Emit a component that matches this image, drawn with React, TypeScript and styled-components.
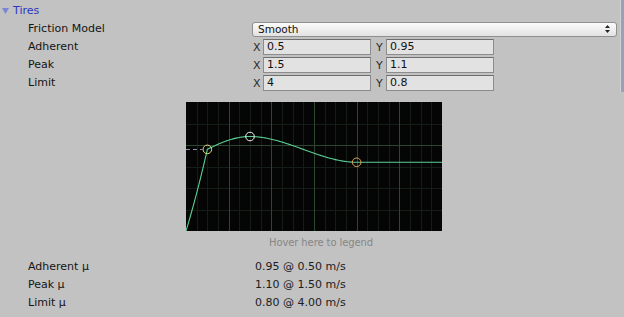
import React from 'react';
import styled, { createGlobalStyle } from 'styled-components';

const GlobalStyle = createGlobalStyle`
  html, body {
    margin: 0;
    padding: 0;
    background: #c2c2c2;
  }
  body {
    font-family: "DejaVu Sans", "Liberation Sans", sans-serif;
    font-size: 11px;
    color: #141414;
  }
`;

const Page = styled.div`
  position: relative;
  width: 624px;
  height: 317px;
  overflow: hidden;
  background: #c2c2c2;
`;

const ScrollThumb = styled.div`
  position: absolute;
  top: 0;
  right: 0;
  width: 3px;
  height: 92px;
  background: #9ba1b4;
  border-left: 1px solid #d2d2d2;
`;

const Foldout = styled.div`
  display: flex;
  align-items: center;
  height: 18px;
  margin-top: 2px;
  padding-left: 2px;
  gap: 4px;
`;

const FoldTitle = styled.span`
  color: #2b36c4;
  line-height: 18px;
`;

const Row = styled.div`
  display: flex;
  align-items: center;
  height: 18px;
  padding: 0 7px 0 28px;
`;

const Label = styled.div`
  width: 224px;
  flex: none;
  line-height: 18px;
  white-space: nowrap;
`;

const Value = styled.div`
  flex: 1;
  padding-left: 3px;
  line-height: 18px;
  color: #1c1c1c;
`;

const Popup = styled.div`
  flex: 1;
  height: 13px;
  display: flex;
  align-items: center;
  justify-content: space-between;
  padding: 0 6px 0 5px;
  border: 1px solid #8f8f8f;
  border-radius: 3px;
  background: linear-gradient(#fbfbfb, #e2e2e2);
  font-size: 10.5px;
  color: #111;
`;

const VectorGrid = styled.div`
  flex: 1;
  display: grid;
  grid-template-columns: repeat(3, 1fr);
  gap: 4px;
`;

const Axis = styled.div`
  display: flex;
  align-items: center;
`;

const AxisLabel = styled.span`
  width: 10px;
  padding-left: 1px;
  flex: none;
  color: #2a2a2a;
`;

const NumberField = styled.div`
  flex: 1;
  height: 14px;
  line-height: 14px;
  padding-left: 3px;
  border: 1px solid #8c8c8c;
  border-top-color: #6e6e6e;
  background: #e2e2e2;
  color: #111;
`;

const GraphArea = styled.div`
  display: flex;
  flex-direction: column;
  align-items: center;
  padding-left: 4px;
  margin-top: 10px;
`;

const GraphBox = styled.svg`
  display: block;
  background: #050505;
`;

const Legend = styled.div`
  width: 256px;
  box-sizing: border-box;
  padding-left: 14px;
  margin-top: 5px;
  text-align: center;
  font-size: 10px;
  line-height: 14px;
  color: #868686;
  letter-spacing: -0.1px;
`;

const InfoRows = styled.div`
  margin-top: 8px;
`;

const W = 256;
const H = 129;
const MAX_X = 6;
const Y_SCALE = 85.9;

const adherent = { x: 0.5, y: 0.95 };
const peak = { x: 1.5, y: 1.1 };
const limit = { x: 4, y: 0.8 };

const hermite = (t: number, p0: number, p1: number, m0: number, m1: number, dx: number) => {
  const t2 = t * t;
  const t3 = t2 * t;
  return (
    (2 * t3 - 3 * t2 + 1) * p0 +
    (t3 - 2 * t2 + t) * m0 * dx +
    (-2 * t3 + 3 * t2) * p1 +
    (t3 - t2) * m1 * dx
  );
};

const friction = (x: number) => {
  if (x <= adherent.x) {
    const t = x / adherent.x;
    return adherent.y * (0.86 * t + 0.14 * t * t);
  }
  if (x <= peak.x) {
    const dx = peak.x - adherent.x;
    const t = (x - adherent.x) / dx;
    return hermite(t, adherent.y, peak.y, 0.26, 0, dx);
  }
  if (x <= limit.x) {
    const dx = limit.x - peak.x;
    const t = (x - peak.x) / dx;
    return hermite(t, peak.y, limit.y, 0, 0, dx);
  }
  return limit.y;
};

const px = (x: number) => (x / MAX_X) * W;
const py = (y: number) => H - y * Y_SCALE;

const FrictionGraph = () => {
  const pts: string[] = [];
  for (let i = 0; i <= 240; i++) {
    const x = (i / 240) * MAX_X;
    pts.push(`${px(x).toFixed(2)},${py(friction(x)).toFixed(2)}`);
  }

  const minorX: number[] = [];
  for (let v = 0.25; v < MAX_X; v += 0.25) {
    if (Math.abs(v - Math.round(v)) > 0.01) minorX.push(v);
  }
  const minorY = [0.25, 0.5, 0.75, 1.25];

  return (
    <GraphBox width={W} height={H} viewBox={`0 0 ${W} ${H}`}>
      {minorX.map((v) => (
        <line key={`mx${v}`} x1={Math.round(px(v)) + 0.5} x2={Math.round(px(v)) + 0.5} y1={0} y2={H} stroke="#141e16" strokeWidth={1} />
      ))}
      {minorY.map((v) => (
        <line key={`my${v}`} x1={0} x2={W} y1={Math.round(py(v)) + 0.5} y2={Math.round(py(v)) + 0.5} stroke="#141e16" strokeWidth={1} />
      ))}
      {[1, 2, 3, 4, 5].map((v) => (
        <line key={`Mx${v}`} x1={Math.round(px(v)) + 0.5} x2={Math.round(px(v)) + 0.5} y1={0} y2={H} stroke="#2c4630" strokeWidth={1} />
      ))}
      <line x1={0} x2={W} y1={Math.round(py(1)) + 0.5} y2={Math.round(py(1)) + 0.5} stroke="#2c4630" strokeWidth={1} />
      <line
        x1={0}
        x2={px(adherent.x) - 5}
        y1={Math.round(py(adherent.y)) + 0.5}
        y2={Math.round(py(adherent.y)) + 0.5}
        stroke="#8d8fa8"
        strokeWidth={1}
        strokeDasharray="4 3"
      />
      <polyline points={pts.join(' ')} fill="none" stroke="#5ad093" strokeWidth={1.1} />
      <circle cx={px(adherent.x)} cy={py(adherent.y)} r={4.3} fill="none" stroke="#e6dc7a" strokeWidth={1} />
      <circle cx={px(peak.x)} cy={py(peak.y)} r={4.3} fill="none" stroke="#f2f2f2" strokeWidth={1} />
      <circle cx={px(limit.x)} cy={py(limit.y)} r={4.3} fill="none" stroke="#e0a458" strokeWidth={1} />
    </GraphBox>
  );
};

const FoldArrow = () => (
  <svg width="7" height="6" viewBox="0 0 7 6">
    <polygon points="0,0 7,0 3.5,6" fill="#7b86d6" />
  </svg>
);

const PopupArrows = () => (
  <svg width="5" height="8" viewBox="0 0 5 8">
    <polygon points="2.5,0 5,3 0,3" fill="#222" />
    <polygon points="0,5 5,5 2.5,8" fill="#222" />
  </svg>
);

const VectorField = ({ x, y }: { x: string; y: string }) => (
  <VectorGrid>
    <Axis>
      <AxisLabel>X</AxisLabel>
      <NumberField>{x}</NumberField>
    </Axis>
    <Axis>
      <AxisLabel>Y</AxisLabel>
      <NumberField>{y}</NumberField>
    </Axis>
  </VectorGrid>
);

const vectors = [
  { label: 'Adherent', x: '0.5', y: '0.95' },
  { label: 'Peak', x: '1.5', y: '1.1' },
  { label: 'Limit', x: '4', y: '0.8' },
];

const info = [
  { label: 'Adherent μ', value: '0.95 @ 0.50 m/s' },
  { label: 'Peak μ', value: '1.10 @ 1.50 m/s' },
  { label: 'Limit μ', value: '0.80 @ 4.00 m/s' },
];

export default function App() {
  return (
    <Page>
      <GlobalStyle />
      <Foldout>
        <FoldArrow />
        <FoldTitle>Tires</FoldTitle>
      </Foldout>
      <Row>
        <Label>Friction Model</Label>
        <Popup>
          <span>Smooth</span>
          <PopupArrows />
        </Popup>
      </Row>
      {vectors.map((v) => (
        <Row key={v.label}>
          <Label>{v.label}</Label>
          <VectorField x={v.x} y={v.y} />
        </Row>
      ))}
      <GraphArea>
        <FrictionGraph />
        <Legend>Hover here to legend</Legend>
      </GraphArea>
      <InfoRows>
        {info.map((r) => (
          <Row key={r.label}>
            <Label>{r.label}</Label>
            <Value>{r.value}</Value>
          </Row>
        ))}
      </InfoRows>
      <ScrollThumb />
    </Page>
  );
}
